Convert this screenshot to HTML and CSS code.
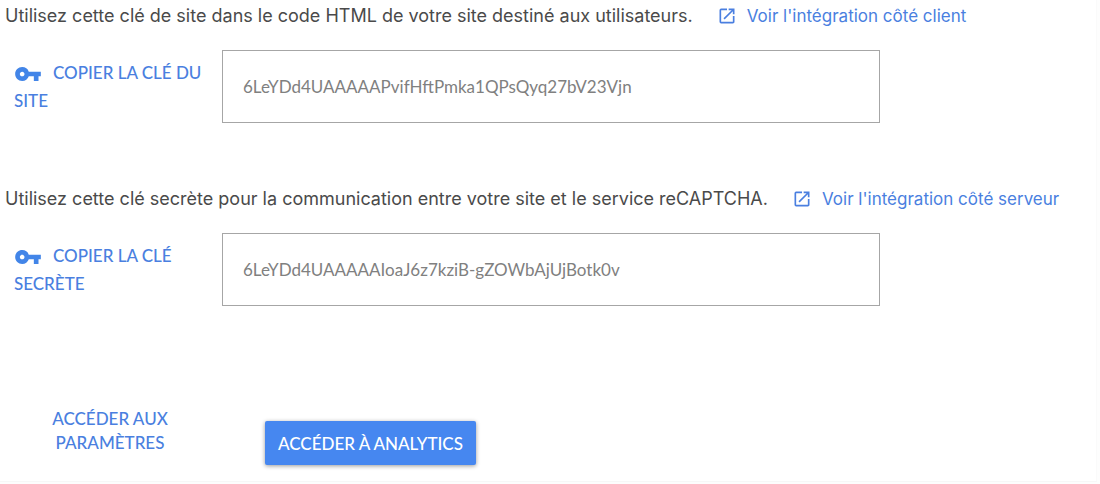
FILE: index.html
```html
<!DOCTYPE html>
<html lang="fr">
<head>
  <meta charset="UTF-8">
  <meta name="viewport" content="width=device-width,initial-scale=1.0">
  <title>reCAPTCHA - Clés du site</title>
  <link rel="stylesheet" href="styles.css">
</head>
<body>
  <main class="card">
    <section class="key-block">
      <div class="hint">
        <label for="site-key">Utilisez cette clé de site dans le code HTML de votre site destiné aux utilisateurs.</label>
        <a class="doc-link" href="#">
          <svg class="open-icon" viewBox="0 0 24 24"><path d="M19 19H5V5h7V3H5a2 2 0 0 0-2 2v14a2 2 0 0 0 2 2h14c1.1 0 2-.9 2-2v-7h-2v7zM14 3v2h3.59l-9.83 9.83 1.41 1.41L19 6.41V10h2V3h-7z"/></svg>
          Voir l'intégration côté client
        </a>
      </div>
      <div class="key-row">
        <button type="button" class="copy">
          <svg class="key-icon" viewBox="0 0 24 24"><path d="M12.65 10A5.99 5.99 0 0 0 7 6c-3.31 0-6 2.69-6 6s2.69 6 6 6a5.99 5.99 0 0 0 5.65-4H17v4h4v-4h2v-4H12.65zM7 14c-1.1 0-2-.9-2-2s.9-2 2-2 2 .9 2 2-.9 2-2 2z"/></svg>COPIER LA CLÉ DU SITE
        </button>
        <input class="key" type="text" id="site-key" value="6LeYDd4UAAAAAPvifHftPmka1QPsQyq27bV23Vjn" readonly>
      </div>
    </section>

    <section class="key-block">
      <div class="hint">
        <label for="secret-key">Utilisez cette clé secrète pour la communication entre votre site et le service reCAPTCHA.</label>
        <a class="doc-link" href="#">
          <svg class="open-icon" viewBox="0 0 24 24"><path d="M19 19H5V5h7V3H5a2 2 0 0 0-2 2v14a2 2 0 0 0 2 2h14c1.1 0 2-.9 2-2v-7h-2v7zM14 3v2h3.59l-9.83 9.83 1.41 1.41L19 6.41V10h2V3h-7z"/></svg>
          Voir l'intégration côté serveur
        </a>
      </div>
      <div class="key-row">
        <button type="button" class="copy">
          <svg class="key-icon" viewBox="0 0 24 24"><path d="M12.65 10A5.99 5.99 0 0 0 7 6c-3.31 0-6 2.69-6 6s2.69 6 6 6a5.99 5.99 0 0 0 5.65-4H17v4h4v-4h2v-4H12.65zM7 14c-1.1 0-2-.9-2-2s.9-2 2-2 2 .9 2 2-.9 2-2 2z"/></svg>COPIER LA CLÉ SECRÈTE
        </button>
        <input class="key" type="text" id="secret-key" value="6LeYDd4UAAAAAIoaJ6z7kziB-gZOWbAjUjBotk0v" readonly>
      </div>
    </section>

    <div class="actions">
      <button type="button" class="btn-text">ACCÉDER AUX PARAMÈTRES</button>
      <button type="button" class="btn-main">ACCÉDER À ANALYTICS</button>
    </div>
  </main>
</body>
</html>
```

FILE: styles.css
```css
* {
  box-sizing: border-box;
}
body {
  margin: 0;
  background: #fdfdfd;
  color: #4a4a4a;
  font-family: Lato, "Liberation Sans", sans-serif;
  font-size: 17px;
}
.card {
  margin-right: 3px;
  padding: 2px 0 16px 0;
  background: #fff;
  border-right: 1px solid #fafafa;
  border-bottom: 1px solid #f7f7f7;
}
.key-block {
  margin-bottom: 62px;
}
.hint {
  display: flex;
  flex-wrap: wrap;
  align-items: center;
  gap: 0 24px;
  padding-left: 5px;
  font-family: Inter, "Liberation Sans", sans-serif;
  font-size: 18px;
  line-height: 28px;
}
.doc-link {
  display: flex;
  align-items: center;
  gap: 10px;
  color: #4a7fe0;
  font-size: 17px;
  text-decoration: none;
}
.open-icon {
  width: 20px;
  height: 20px;
  fill: #4a7fe0;
}
.key-row {
  display: grid;
  grid-template-columns: 222px 60%;
  align-items: center;
  margin-top: 20px;
}
button {
  border: none;
  background: none;
  color: #4a7fe0;
  font-family: inherit;
  font-size: 17px;
  font-weight: 500;
  cursor: pointer;
}
.copy {
  padding: 0 10px 0 14px;
  line-height: 28px;
  text-align: left;
}
.key-icon {
  width: 28px;
  height: 28px;
  margin: -4px 11px -4px 0;
  vertical-align: middle;
  fill: #4285e8;
}
.key {
  width: 100%;
  height: 73px;
  padding: 0 20px;
  border: 1px solid #a6a6a6;
  background: #fff;
  color: #808080;
  font-family: inherit;
  font-size: 17px;
}
.actions {
  display: flex;
  align-items: flex-end;
  gap: 75px;
  margin-top: 101px;
  padding-left: 30px;
}
.btn-text {
  width: 160px;
  padding: 0 0 10px 0;
  line-height: 24px;
}
.btn-main {
  height: 44px;
  padding: 0 13px;
  border-radius: 2px;
  background: #4687f0;
  color: #fff;
  box-shadow: 0 1px 4px #00000066;
}
```
